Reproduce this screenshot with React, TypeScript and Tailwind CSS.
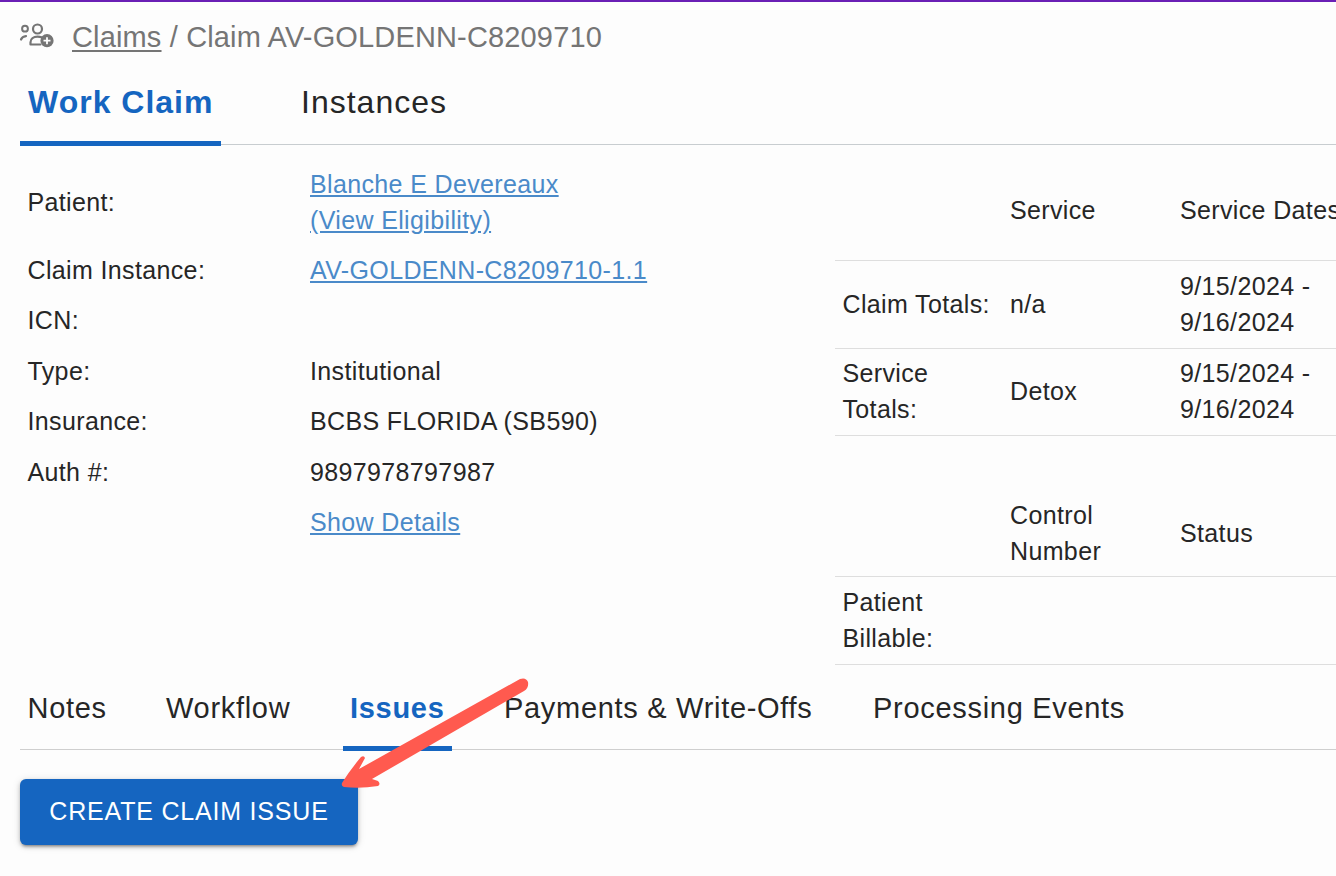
import { useState } from 'react';

const blue = 'text-[#1565c0]';

function ClaimsIcon() {
  return (
    <svg width="36" height="30" viewBox="0 0 36 30" fill="none" className="shrink-0 text-[#757575]">
      <circle cx="6" cy="7.7" r="2.9" stroke="currentColor" strokeWidth="2" />
      <circle cx="18.5" cy="8" r="4.5" stroke="currentColor" strokeWidth="2.2" />
      <path d="M2 18.5c.8-2 2.5-3.2 5-3.4" stroke="currentColor" strokeWidth="2.2" strokeLinecap="round" />
      <path d="M11.5 23.5v-2.2c0-3.4 3.2-5.6 7-5.6 1.6 0 3 .2 4 .6M11.5 23.5h10" stroke="currentColor" strokeWidth="2.2" strokeLinecap="round" />
      <circle cx="28" cy="19.7" r="6.6" fill="currentColor" />
      <path d="M28 16.2v7M24.5 19.7h7" stroke="#fff" strokeWidth="1.8" />
    </svg>
  );
}

function InfoRow({ label, rowClass, children }: { label: string; rowClass: string; children?: React.ReactNode }) {
  return (
    <div className={`flex items-center ${rowClass}`}>
      <div className="w-[282.5px] shrink-0">{label}</div>
      <div>{children}</div>
    </div>
  );
}

const linkClass = 'text-[#4a8ac9] underline';

export default function App() {
  const [tab] = useState('Issues');
  const subTabs = [
    { label: 'Notes', cls: 'w-[146px] pl-[7.5px]' },
    { label: 'Workflow', cls: 'w-[177px]' },
    { label: 'Issues', cls: 'w-[109px] pl-[7px]' },
    { label: 'Payments & Write-Offs', cls: 'w-[421px] pl-[52px]' },
    { label: 'Processing Events', cls: 'w-[300px]' },
  ];

  return (
    <div className="relative h-[876px] w-[1336px] overflow-hidden bg-[#fdfdfd] font-['Liberation_Sans',sans-serif] text-[#262626]">
      <div className="h-[2px] bg-[#6a1fb5]" />

      {/* Breadcrumb */}
      <div className="flex h-[70px] items-start pl-[19px] pt-[19px] leading-[32px] text-[#757575]">
        <ClaimsIcon />
        <div className="ml-[17px] flex h-[32px] items-center whitespace-pre text-[29px] tracking-[0.15px]">
          <span className="underline underline-offset-[3px]">Claims</span>
          <span> / Claim AV-GOLDENN-C8209710</span>
        </div>
      </div>

      {/* Main tabs */}
      <div className="ml-[20px] flex h-[73px] border-b border-[#c8cdd0]">
        <div className={`h-[74px] w-[201px] border-b-[5px] border-[#1565c0] pl-[8px] pt-[11px] text-[32px] leading-[38px] font-bold tracking-[1px] ${blue}`}>
          Work Claim
        </div>
        <div className="pl-[80px] pt-[11px] text-[32px] leading-[38px] tracking-[1px]">Instances</div>
      </div>

      {/* Claim details */}
      <div className="flex h-[520px] text-[25px] tracking-[0.36px]">
        <div className="w-[835px] pl-[27.5px] pt-[21px] leading-[36px]">
          <InfoRow label="Patient:" rowClass="h-[72px]">
            <div className={linkClass}>Blanche E Devereaux</div>
            <div className={linkClass}>(View Eligibility)</div>
          </InfoRow>
          <InfoRow label="Claim Instance:" rowClass="mt-[14px] h-[36px]">
            <span className={linkClass}>AV-GOLDENN-C8209710-1.1</span>
          </InfoRow>
          <InfoRow label="ICN:" rowClass="mt-[14px] h-[36px]" />
          <InfoRow label="Type:" rowClass="mt-[15px] h-[36px]">Institutional</InfoRow>
          <InfoRow label="Insurance:" rowClass="mt-[14px] h-[36px]">BCBS FLORIDA (SB590)</InfoRow>
          <InfoRow label="Auth #:" rowClass="mt-[15px] h-[36px]">9897978797987</InfoRow>
          <InfoRow label="" rowClass="mt-[14px] h-[36px]">
            <span className={linkClass}>Show Details</span>
          </InfoRow>
        </div>

        <div className="w-[501px] overflow-hidden leading-[36px] whitespace-nowrap">
          <div className="flex h-[116px] items-center border-b border-[#dedede] pt-[14px]">
            <div className="w-[175px] shrink-0" />
            <div className="w-[170px] shrink-0">Service</div>
            <div className="shrink-0">Service Dates</div>
          </div>
          <div className="flex h-[88px] items-center border-b border-[#dedede] pb-[2px]">
            <div className="w-[175px] shrink-0 pl-[7.5px]">Claim Totals:</div>
            <div className="w-[170px] shrink-0">n/a</div>
            <div>9/15/2024 -<br />9/16/2024</div>
          </div>
          <div className="flex h-[87px] items-center border-b border-[#dedede] pb-[2px]">
            <div className="w-[175px] shrink-0 pl-[7.5px]">Service<br />Totals:</div>
            <div className="w-[170px] shrink-0">Detox</div>
            <div>9/15/2024 -<br />9/16/2024</div>
          </div>
          <div className="flex h-[141px] items-end border-b border-[#dedede] pb-[7px]">
            <div className="w-[175px] shrink-0" />
            <div className="w-[170px] shrink-0">Control<br />Number</div>
            <div className="pb-[18px]">Status</div>
          </div>
          <div className="flex h-[88px] items-center border-b border-[#dedede] pb-[1px]">
            <div className="w-[175px] shrink-0 pl-[7.5px]">Patient<br />Billable:</div>
          </div>
        </div>
      </div>

      {/* Sub tabs */}
      <div className="ml-[20px] flex h-[85px] border-b border-[#cfcfcf]">
        {subTabs.map((t) => (
          <div
            key={t.label}
            className={`h-[86px] shrink-0 whitespace-nowrap pt-[26px] text-[29px] leading-[34px] tracking-[0.7px] ${t.cls} ${
              t.label === tab ? `border-b-[5px] border-[#1565c0] font-bold ${blue}` : ''
            }`}
          >
            {t.label}
          </div>
        ))}
      </div>

      <div className="pl-[20px] pt-[29px]">
        <button className="flex h-[66px] w-[338px] items-center justify-center rounded-[6px] bg-[#1565c0] text-[25px] tracking-[0.8px] text-white shadow-[0_3px_3px_-2px_rgba(0,0,0,0.35),0_2px_4px_0_rgba(0,0,0,0.2),0_1px_8px_0_rgba(0,0,0,0.12)]">
          CREATE CLAIM ISSUE
        </button>
      </div>

      {/* Annotation arrow */}
      <svg width="1336" height="876" viewBox="0 0 1336 876" fill="none" className="pointer-events-none absolute left-0 top-0">
        <path
          d="M520 679 Q526 677 528 682 Q529 688 524 691 L372 779 L378 781 Q381 784 378 786 Q360 789 344 787 Q341 786 342 783 Q350 770 361 757 Q364 755 365 758 L359 769 Z"
          fill="#ff5a4f"
        />
      </svg>
    </div>
  );
}
